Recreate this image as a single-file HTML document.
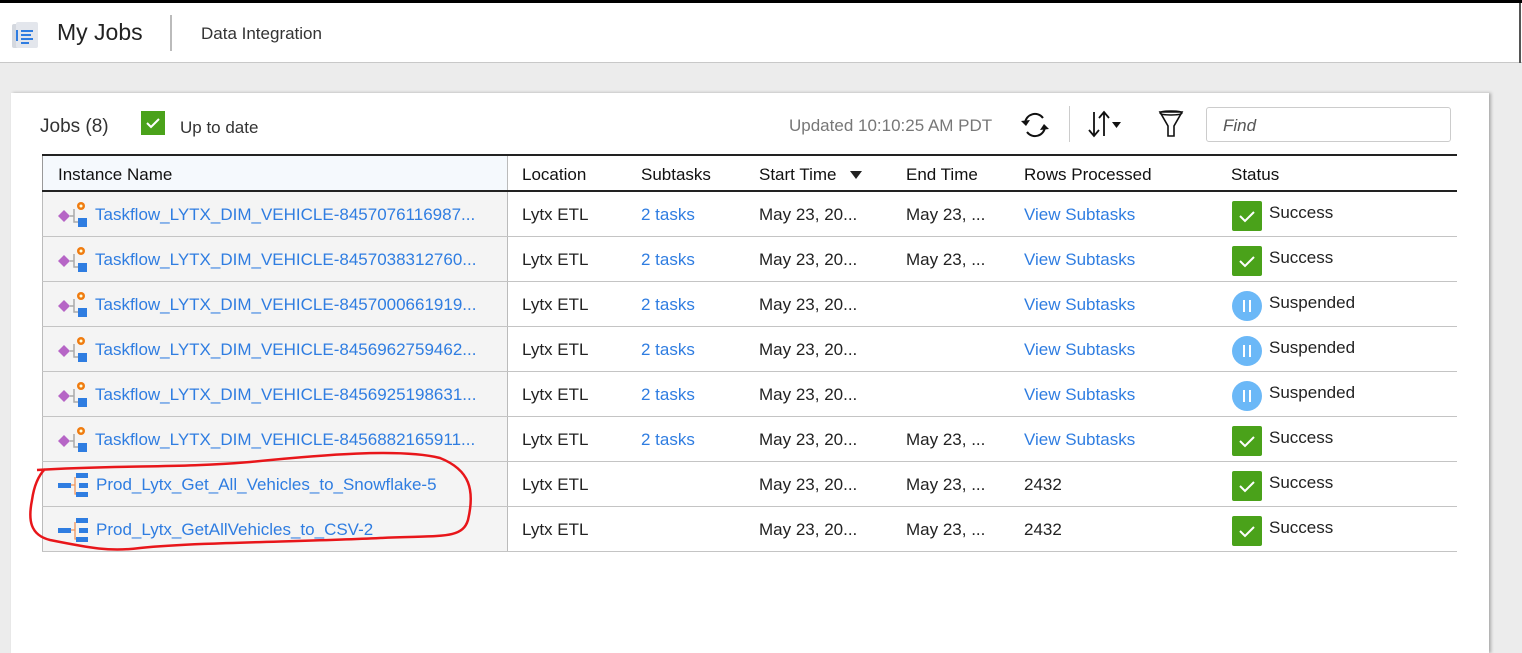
<!DOCTYPE html>
<html><head><meta charset="utf-8"><style>
*{margin:0;padding:0;box-sizing:border-box}
body{width:1522px;height:641px;overflow:hidden;background:#ececec;font-family:"Liberation Sans",sans-serif;position:relative;color:#222}
.a{position:absolute;white-space:nowrap}
.hdr{position:absolute;left:0;top:0;width:1522px;height:63px;background:#fff;border-top:3px solid #000;border-bottom:1px solid #c8c8c8}
.card{position:absolute;left:11px;top:93px;width:1478px;height:560px;background:#fff;box-shadow:2px 0 3px #aaa}
.row{position:absolute;left:42px;width:1415px;height:45px;border-bottom:1px solid #c4c4c4;font-size:17px}
.row .c1{position:absolute;left:0;top:0;width:466px;height:44px;background:#f4f4f4;border-left:1px solid #bbb;border-right:1px solid #bbb}
.row span{position:absolute;top:13px}
.lnk{color:#2f7de1}
.ok{position:absolute;left:1190px;top:9px;width:30px;height:30px;background:#4aa21a;border-radius:2px}
.sp{position:absolute;left:1190px;top:9px;width:30px;height:30px;background:#6bb8f7;border-radius:50%}
</style></head><body>
<div class="hdr">
 <svg class="a" style="left:11px;top:19px" width="30" height="28"><rect x="1" y="2" width="24" height="24" rx="2" fill="#d4d8df"/><rect x="5" y="0" width="22" height="26" rx="2" fill="#e3e6ec"/><rect x="5" y="8" width="2" height="11" fill="#2f7de1"/><rect x="10" y="8" width="12" height="2" fill="#2f7de1"/><rect x="10" y="12" width="10" height="2" fill="#2f7de1"/><rect x="10" y="16" width="12" height="2" fill="#2f7de1"/><rect x="10" y="20" width="8" height="2" fill="#2f7de1"/></svg>
 <div class="a" style="left:57px;top:16px;font-size:23px;color:#222">My Jobs</div>
 <div class="a" style="left:170px;top:12px;width:2px;height:36px;background:#bbb"></div>
 <div class="a" style="left:201px;top:21px;font-size:17px;color:#333">Data Integration</div>
</div>
<div class="a" style="left:1519px;top:3px;width:2px;height:60px;background:#555"></div>
<div class="card"></div>
<div class="a" style="left:40px;top:116px;font-size:19px;color:#333">Jobs (8)</div>
<div class="a" style="left:141px;top:111px;width:24px;height:24px;background:#4aa21a"><svg width="24" height="24"><path d="M6 12l4 4 8-8" stroke="#fff" stroke-width="2" fill="none"/></svg></div>
<div class="a" style="left:180px;top:118px;font-size:17px;color:#333">Up to date</div>
<div class="a" style="left:789px;top:116px;font-size:17px;color:#777">Updated 10:10:25 AM PDT</div>
<svg class="a" style="left:1019px;top:109px" width="32" height="32"><path d="M6 14a10 10 0 0 1 18-5" stroke="#111" stroke-width="2" fill="none"/><path d="M26 18a10 10 0 0 1-18 5" stroke="#111" stroke-width="2" fill="none"/><path d="M2 12l5 5 4-6z" fill="#111"/><path d="M30 20l-5-5-4 6z" fill="#111"/></svg>
<div class="a" style="left:1069px;top:106px;width:1px;height:36px;background:#ccc"></div>
<svg class="a" style="left:1087px;top:108px" width="50" height="32"><path d="M7 4v24M2 22l5 6 5-6M17 28V4M12 10l5-6 5 6" stroke="#111" stroke-width="1.8" fill="none"/><path d="M25 14h9l-4.5 6z" fill="#111"/></svg>
<svg class="a" style="left:1157px;top:108px" width="30" height="32"><path d="M3 4h22l-8 14v10h-6V18z" stroke="#111" stroke-width="1.6" fill="none"/><ellipse cx="14" cy="5" rx="11" ry="2" stroke="#111" stroke-width="1.4" fill="none"/></svg>
<div class="a" style="left:1206px;top:107px;width:245px;height:35px;border:1px solid #ccc;border-radius:3px;font-size:17px;font-style:italic;color:#555;padding:8px 16px">Find</div>

<div class="a" style="left:42px;top:154px;width:1415px;height:38px;border-top:2px solid #222;border-bottom:2px solid #222;font-size:17px;color:#111">
 <div class="a" style="left:0;top:0;width:466px;height:34px;background:#f5f9fd;border-left:1px solid #999;border-right:1px solid #bbb"></div>
 <span class="a" style="left:16px;top:9px">Instance Name</span>
 <span class="a" style="left:480px;top:9px">Location</span>
 <span class="a" style="left:599px;top:9px">Subtasks</span>
 <span class="a" style="left:717px;top:9px">Start Time</span>
 <svg class="a" style="left:807px;top:14px" width="14" height="10"><path d="M1 1h12l-6 8z" fill="#222"/></svg>
 <span class="a" style="left:864px;top:9px">End Time</span>
 <span class="a" style="left:982px;top:9px">Rows Processed</span>
 <span class="a" style="left:1189px;top:9px">Status</span>
</div>

<div class="row" style="top:192px"><div class="c1"></div>
<svg class="a" style="left:14px;top:8px" width="36" height="30"><path d="M2 16l6-6 6 6-6 6z" fill="#b665c6"/><path d="M14 16h4M18 9v13h4" stroke="#aaa" stroke-width="1.5" fill="none"/><circle cx="25" cy="6" r="4" fill="#f07c10"/><circle cx="25" cy="6" r="1.5" fill="#ffd"/><rect x="22" y="18" width="9" height="9" fill="#2f7de1"/></svg>
<span class="lnk" style="left:53px">Taskflow_LYTX_DIM_VEHICLE-8457076116987...</span><span style="left:480px">Lytx ETL</span><span class="lnk" style="left:599px">2 tasks</span><span style="left:717px">May 23, 20...</span><span style="left:864px">May 23, ...</span><span class="lnk" style="left:982px">View Subtasks</span><div class="ok"><svg width="30" height="30"><path d="M8 15l5 5 9-9" stroke="#fff" stroke-width="2" fill="none"/></svg></div><span style="left:1227px;top:11px">Success</span></div>

<div class="row" style="top:237px"><div class="c1"></div>
<svg class="a" style="left:14px;top:8px" width="36" height="30"><path d="M2 16l6-6 6 6-6 6z" fill="#b665c6"/><path d="M14 16h4M18 9v13h4" stroke="#aaa" stroke-width="1.5" fill="none"/><circle cx="25" cy="6" r="4" fill="#f07c10"/><circle cx="25" cy="6" r="1.5" fill="#ffd"/><rect x="22" y="18" width="9" height="9" fill="#2f7de1"/></svg>
<span class="lnk" style="left:53px">Taskflow_LYTX_DIM_VEHICLE-8457038312760...</span><span style="left:480px">Lytx ETL</span><span class="lnk" style="left:599px">2 tasks</span><span style="left:717px">May 23, 20...</span><span style="left:864px">May 23, ...</span><span class="lnk" style="left:982px">View Subtasks</span><div class="ok"><svg width="30" height="30"><path d="M8 15l5 5 9-9" stroke="#fff" stroke-width="2" fill="none"/></svg></div><span style="left:1227px;top:11px">Success</span></div>

<div class="row" style="top:282px"><div class="c1"></div>
<svg class="a" style="left:14px;top:8px" width="36" height="30"><path d="M2 16l6-6 6 6-6 6z" fill="#b665c6"/><path d="M14 16h4M18 9v13h4" stroke="#aaa" stroke-width="1.5" fill="none"/><circle cx="25" cy="6" r="4" fill="#f07c10"/><circle cx="25" cy="6" r="1.5" fill="#ffd"/><rect x="22" y="18" width="9" height="9" fill="#2f7de1"/></svg>
<span class="lnk" style="left:53px">Taskflow_LYTX_DIM_VEHICLE-8457000661919...</span><span style="left:480px">Lytx ETL</span><span class="lnk" style="left:599px">2 tasks</span><span style="left:717px">May 23, 20...</span><span class="lnk" style="left:982px">View Subtasks</span><div class="sp"><svg width="30" height="30"><path d="M12 9v12M18 9v12" stroke="#fff" stroke-width="2"/></svg></div><span style="left:1227px;top:11px">Suspended</span></div>

<div class="row" style="top:327px"><div class="c1"></div>
<svg class="a" style="left:14px;top:8px" width="36" height="30"><path d="M2 16l6-6 6 6-6 6z" fill="#b665c6"/><path d="M14 16h4M18 9v13h4" stroke="#aaa" stroke-width="1.5" fill="none"/><circle cx="25" cy="6" r="4" fill="#f07c10"/><circle cx="25" cy="6" r="1.5" fill="#ffd"/><rect x="22" y="18" width="9" height="9" fill="#2f7de1"/></svg>
<span class="lnk" style="left:53px">Taskflow_LYTX_DIM_VEHICLE-8456962759462...</span><span style="left:480px">Lytx ETL</span><span class="lnk" style="left:599px">2 tasks</span><span style="left:717px">May 23, 20...</span><span class="lnk" style="left:982px">View Subtasks</span><div class="sp"><svg width="30" height="30"><path d="M12 9v12M18 9v12" stroke="#fff" stroke-width="2"/></svg></div><span style="left:1227px;top:11px">Suspended</span></div>

<div class="row" style="top:372px"><div class="c1"></div>
<svg class="a" style="left:14px;top:8px" width="36" height="30"><path d="M2 16l6-6 6 6-6 6z" fill="#b665c6"/><path d="M14 16h4M18 9v13h4" stroke="#aaa" stroke-width="1.5" fill="none"/><circle cx="25" cy="6" r="4" fill="#f07c10"/><circle cx="25" cy="6" r="1.5" fill="#ffd"/><rect x="22" y="18" width="9" height="9" fill="#2f7de1"/></svg>
<span class="lnk" style="left:53px">Taskflow_LYTX_DIM_VEHICLE-8456925198631...</span><span style="left:480px">Lytx ETL</span><span class="lnk" style="left:599px">2 tasks</span><span style="left:717px">May 23, 20...</span><span class="lnk" style="left:982px">View Subtasks</span><div class="sp"><svg width="30" height="30"><path d="M12 9v12M18 9v12" stroke="#fff" stroke-width="2"/></svg></div><span style="left:1227px;top:11px">Suspended</span></div>

<div class="row" style="top:417px"><div class="c1"></div>
<svg class="a" style="left:14px;top:8px" width="36" height="30"><path d="M2 16l6-6 6 6-6 6z" fill="#b665c6"/><path d="M14 16h4M18 9v13h4" stroke="#aaa" stroke-width="1.5" fill="none"/><circle cx="25" cy="6" r="4" fill="#f07c10"/><circle cx="25" cy="6" r="1.5" fill="#ffd"/><rect x="22" y="18" width="9" height="9" fill="#2f7de1"/></svg>
<span class="lnk" style="left:53px">Taskflow_LYTX_DIM_VEHICLE-8456882165911...</span><span style="left:480px">Lytx ETL</span><span class="lnk" style="left:599px">2 tasks</span><span style="left:717px">May 23, 20...</span><span style="left:864px">May 23, ...</span><span class="lnk" style="left:982px">View Subtasks</span><div class="ok"><svg width="30" height="30"><path d="M8 15l5 5 9-9" stroke="#fff" stroke-width="2" fill="none"/></svg></div><span style="left:1227px;top:11px">Success</span></div>

<div class="row" style="top:462px"><div class="c1"></div>
<svg class="a" style="left:14px;top:10px" width="36" height="26"><rect x="2" y="11" width="13" height="5" fill="#2f7de1"/><path d="M15 13h4M19 5v17h4" stroke="#f0955a" stroke-width="1.3" fill="none"/><rect x="20" y="1" width="12" height="5" fill="#2f7de1"/><rect x="23" y="11" width="9" height="5" fill="#2f7de1"/><rect x="20" y="20" width="12" height="5" fill="#2f7de1"/></svg>
<span class="lnk" style="left:54px">Prod_Lytx_Get_All_Vehicles_to_Snowflake-5</span><span style="left:480px">Lytx ETL</span><span style="left:717px">May 23, 20...</span><span style="left:864px">May 23, ...</span><span style="left:982px">2432</span><div class="ok"><svg width="30" height="30"><path d="M8 15l5 5 9-9" stroke="#fff" stroke-width="2" fill="none"/></svg></div><span style="left:1227px;top:11px">Success</span></div>

<div class="row" style="top:507px"><div class="c1"></div>
<svg class="a" style="left:14px;top:10px" width="36" height="26"><rect x="2" y="11" width="13" height="5" fill="#2f7de1"/><path d="M15 13h4M19 5v17h4" stroke="#f0955a" stroke-width="1.3" fill="none"/><rect x="20" y="1" width="12" height="5" fill="#2f7de1"/><rect x="23" y="11" width="9" height="5" fill="#2f7de1"/><rect x="20" y="20" width="12" height="5" fill="#2f7de1"/></svg>
<span class="lnk" style="left:54px">Prod_Lytx_GetAllVehicles_to_CSV-2</span><span style="left:480px">Lytx ETL</span><span style="left:717px">May 23, 20...</span><span style="left:864px">May 23, ...</span><span style="left:982px">2432</span><div class="ok"><svg width="30" height="30"><path d="M8 15l5 5 9-9" stroke="#fff" stroke-width="2" fill="none"/></svg></div><span style="left:1227px;top:11px">Success</span></div>

<svg class="a" style="left:0;top:0" width="1522" height="641"><path d="M37 470 C120 465 180 468 250 462 C320 455 400 448 440 458 C470 470 475 490 468 520 C462 540 440 535 380 538 C300 542 200 542 140 548 C110 552 90 548 50 540 C30 535 28 520 32 500 C34 486 38 476 45 469" stroke="#e8161a" stroke-width="2.5" fill="none"/></svg>
</body></html>
